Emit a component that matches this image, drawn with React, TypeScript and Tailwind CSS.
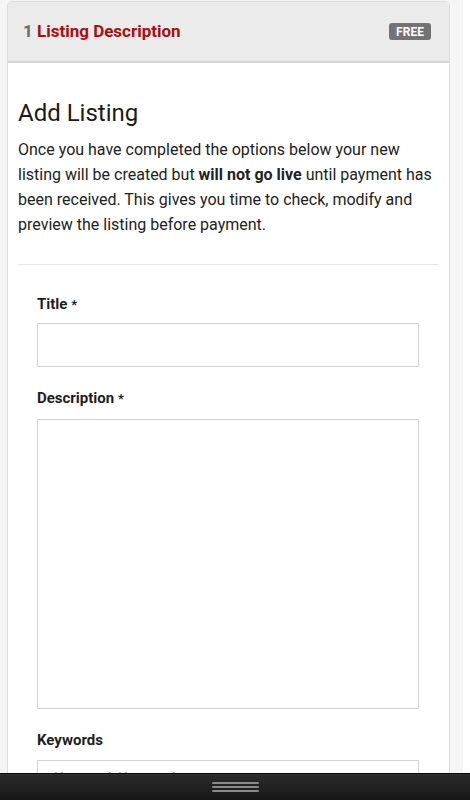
import React from "react";

export default function App() {
  return (
    <div className="min-h-[800px] bg-white" style={{ fontFamily: "Roboto, 'Noto Sans', sans-serif" }}>
      <div className="w-[463px] min-h-[800px] bg-[#f5f5f5] pt-px">
        <div className="ml-[7px] w-[443px] rounded-t-[5px] border border-[#dcdcdc] bg-white">
          <div className="flex h-[61px] items-center justify-between rounded-t-[5px] border-b-2 border-[#d6d6d6] bg-[#ebebeb] pl-[15px] pr-[18px]">
            <div className="text-[17px] font-bold leading-none">
              <span className="text-[#6b6b6b]">1 </span>
              <span className="text-[#a5100f]">Listing Description</span>
            </div>
            <span className="flex h-[17px] w-[42px] items-center justify-center rounded-[3px] bg-[#737373] text-[12px] font-bold leading-none text-white">
              FREE
            </span>
          </div>
          <div className="px-[10px]">
            <h1 className="mt-[35px] text-[24px] leading-[30px] font-normal text-[#1a1a1a]">Add Listing</h1>
            <p className="mt-[9px] text-[16px] leading-[25px] text-[#222]">
              Once you have completed the options below your new listing will be created but{" "}
              <b className="font-bold">will not go live</b> until payment has been received. This gives you time to
              check, modify and preview the listing before payment.
            </p>
            <div className="mt-[27px] h-px bg-[#e8e8e8]" />
            <div className="pl-[19px] pr-[20px] pt-[29px] pb-10">
              <label className="block text-[15px] leading-[20px] font-bold text-[#1e1e1e]">
                Title <span className="text-[13px]">*</span>
              </label>
              <div className="mt-[8px] h-[44px] border-[1.5px] border-[#d2d2d2] bg-white" />
              <label className="mt-[21px] block text-[15px] leading-[20px] font-bold text-[#1e1e1e]">
                Description <span className="text-[13px]">*</span>
              </label>
              <div className="mt-[10px] h-[290px] border-[1.5px] border-[#d2d2d2] bg-white" />
              <label className="mt-[21px] block text-[15px] leading-[20px] font-bold text-[#1e1e1e]">Keywords</label>
              <div className="mt-[10px] flex h-[44px] items-start border-[1.5px] border-[#d2d2d2] bg-white px-[16px] pt-[6px] text-[15px] text-[#999]">
                Keyword, Keyword...
              </div>
            </div>
          </div>
        </div>
      </div>
      <div className="fixed bottom-0 left-0 flex h-[27px] w-[470px] items-center justify-center border-t border-[#0a0a0a] bg-gradient-to-b from-[#2c2c2c] to-[#171717]">
        <div className="flex w-[47px] flex-col gap-[2px]">
          <div className="h-[2px] rounded-full bg-[#8a8a8a]" />
          <div className="h-[2px] rounded-full bg-[#8a8a8a]" />
          <div className="h-[2px] rounded-full bg-[#8a8a8a]" />
        </div>
      </div>
    </div>
  );
}
